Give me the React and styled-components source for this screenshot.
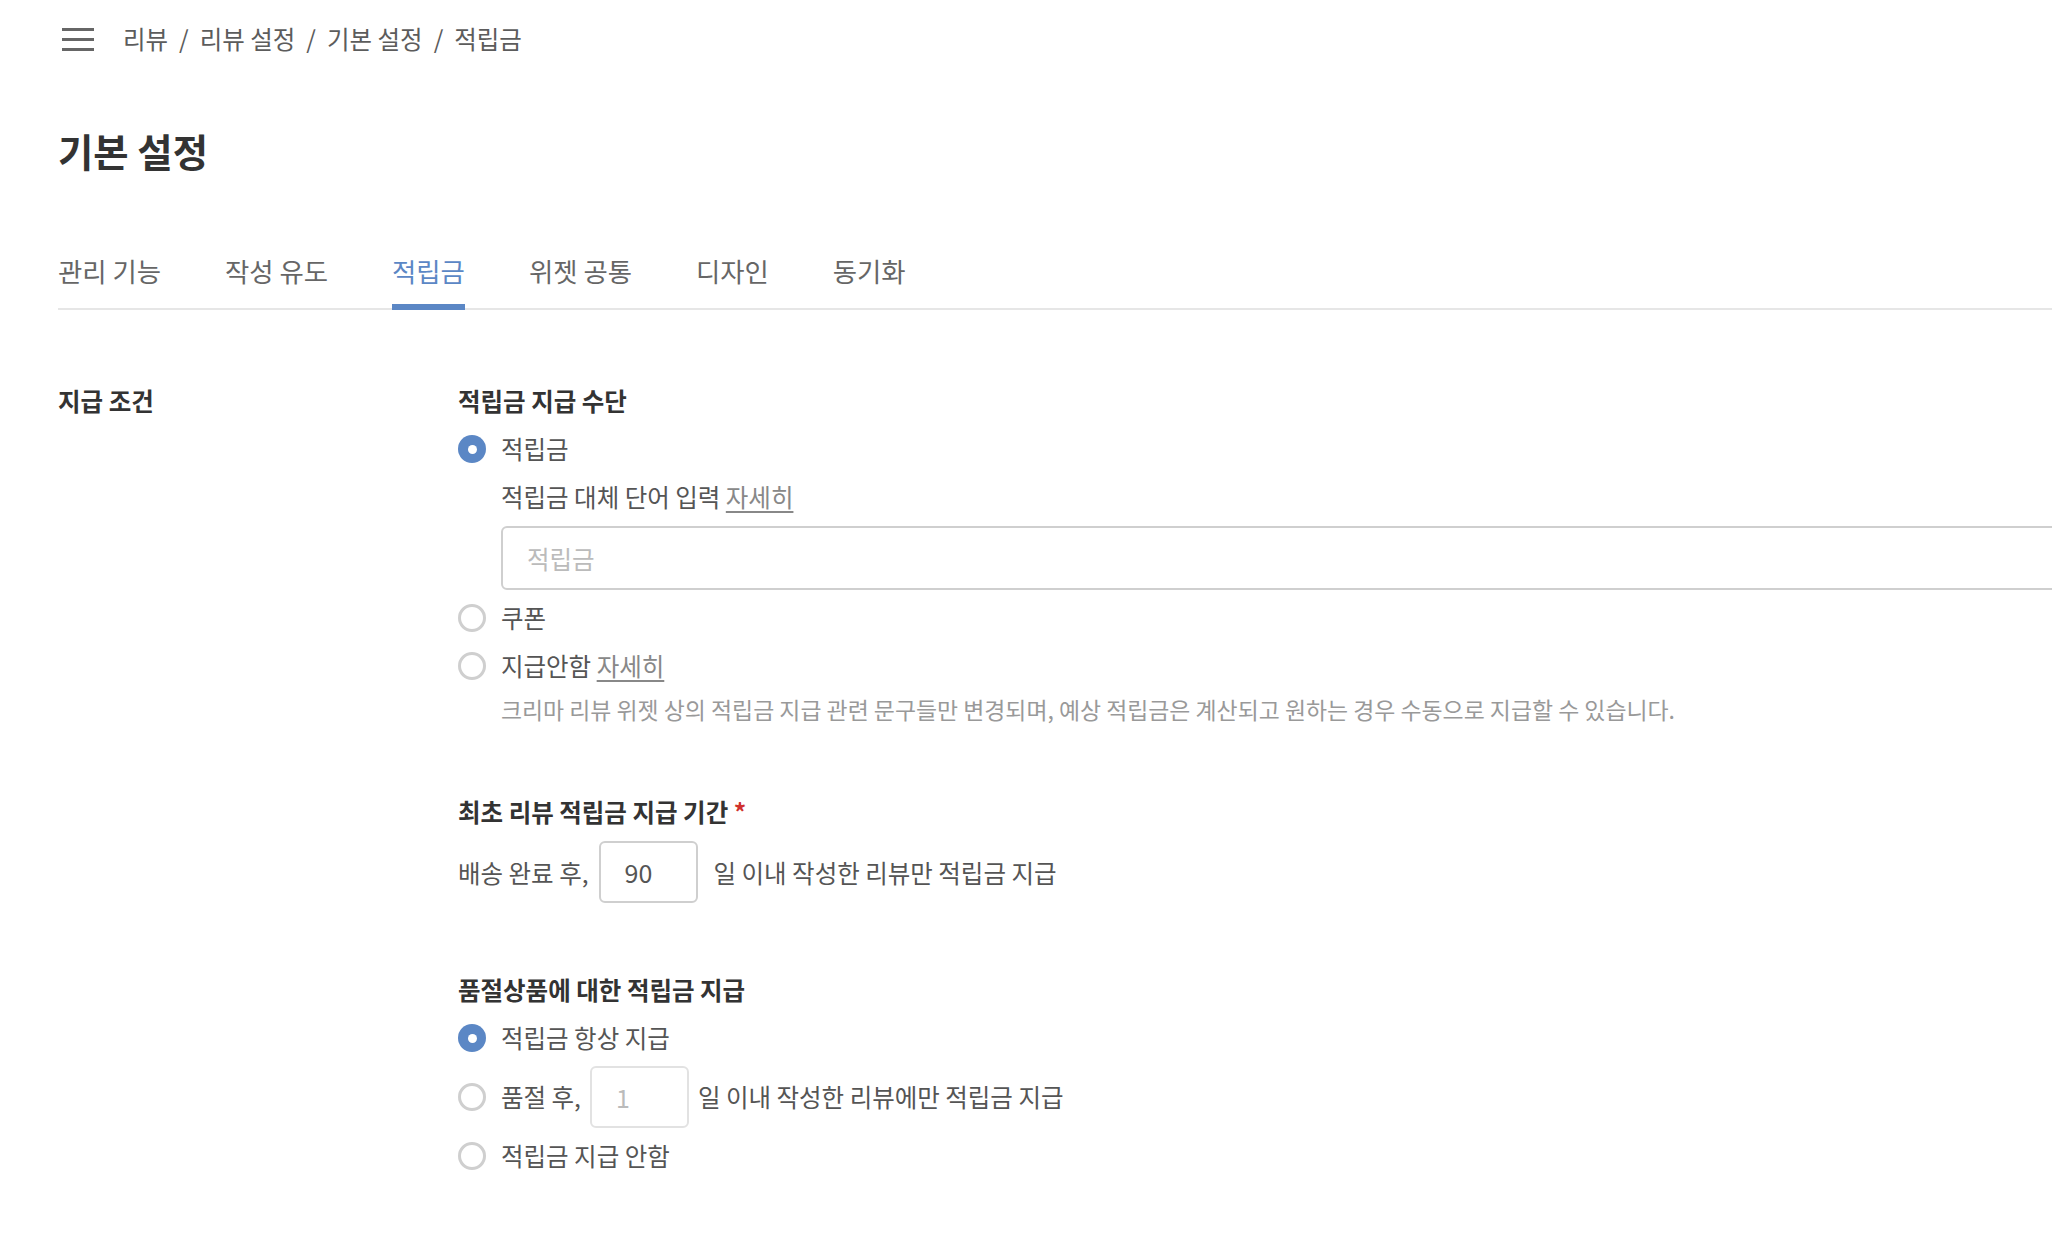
import styled, { createGlobalStyle } from 'styled-components';

const GlobalStyle = createGlobalStyle`
  html, body {
    margin: 0;
    padding: 0;
    background: #fff;
    overflow-x: hidden;
  }
  body {
    font-family: "Noto Sans CJK KR", "Noto Sans", sans-serif;
    color: #555;
  }
`;

const tabs = ['관리 기능', '작성 유도', '적립금', '위젯 공통', '디자인', '동기화'];
const crumbs = ['리뷰', '리뷰 설정', '기본 설정', '적립금'];

function Radio({ checked, label, children }) {
  return (
    <RadioRow>
      <RadioMark checked={checked} />
      {label && <span>{label}</span>}
      {children}
    </RadioRow>
  );
}

export default function App() {
  return (
    <Page>
      <GlobalStyle />
      <TopBar>
        <Hamburger aria-label="menu">
          <span />
          <span />
          <span />
        </Hamburger>
        <Breadcrumb>
          {crumbs.map((c, i) => (
            <li key={c + i}>
              {i > 0 && <Sep>/</Sep>}
              {c}
            </li>
          ))}
        </Breadcrumb>
      </TopBar>

      <Title>기본 설정</Title>

      <Tabs>
        {tabs.map((t) => (
          <Tab key={t} active={t === '적립금'}>{t}</Tab>
        ))}
      </Tabs>

      <Content>
        <SideLabel>지급 조건</SideLabel>
        <Fields>
          <Section>
            <Heading>적립금 지급 수단</Heading>
            <Radio checked label="적립금" />
            <SubLabel>
              적립금 대체 단어 입력 <HelpLink>자세히</HelpLink>
            </SubLabel>
            <WideInput placeholder="적립금" />
            <Radio label="쿠폰" />
            <Radio>
              <span>
                지급안함 <HelpLink>자세히</HelpLink>
              </span>
            </Radio>
            <HelpText>
              크리마 리뷰 위젯 상의 적립금 지급 관련 문구들만 변경되며, 예상 적립금은 계산되고 원하는 경우 수동으로 지급할 수 있습니다.
            </HelpText>
          </Section>

          <Section>
            <Heading>
              최초 리뷰 적립금 지급 기간 <Required>*</Required>
            </Heading>
            <InlineRow>
              <span>배송 완료 후,</span>
              <DayInput defaultValue="90" trail={6} />
              <span>일 이내 작성한 리뷰만 적립금 지급</span>
            </InlineRow>
          </Section>

          <Section>
            <Heading>품절상품에 대한 적립금 지급</Heading>
            <RadioGroup>
              <Radio checked label="적립금 항상 지급" />
              <Radio>
                <InlineGroup>
                  <span>품절 후,</span>
                  <DayInput defaultValue="1" disabled trail={0} />
                  <span>일 이내 작성한 리뷰에만 적립금 지급</span>
                </InlineGroup>
              </Radio>
              <Radio label="적립금 지급 안함" />
            </RadioGroup>
          </Section>
        </Fields>
      </Content>
    </Page>
  );
}

const Page = styled.div`
  padding: 0 0 60px 58px;
  min-height: 1238px;
  box-sizing: border-box;
`;

const TopBar = styled.header`
  height: 78px;
  display: flex;
  align-items: center;
  gap: 29px;
`;

const Hamburger = styled.button`
  border: 0;
  background: none;
  padding: 0;
  margin-left: 4px;
  width: 32px;
  display: flex;
  flex-direction: column;
  gap: 7px;
  cursor: pointer;

  span {
    display: block;
    height: 3px;
    width: 32px;
    background: #666;
  }
`;

const Breadcrumb = styled.ol`
  list-style: none;
  margin: 0;
  padding: 0;
  display: flex;
  font-size: 24.5px;
  line-height: 36px;
  color: #5c5c5c;

  li {
    white-space: pre;
  }
`;

const Sep = styled.span`
  margin: 0 11px;
`;

const Title = styled.h1`
  margin: 47px 0 0;
  font-size: 38.4px;
  line-height: 50px;
  font-weight: 700;
  color: #333;
`;

const Tabs = styled.nav`
  margin-top: 78px;
  display: flex;
  gap: 64px;
  border-bottom: 2px solid #e6e6e6;
`;

const Tab = styled.div`
  font-size: 26.4px;
  line-height: 36px;
  padding-bottom: 15px;
  margin-bottom: -2px;
  color: ${(p) => (p.active ? '#5b87c5' : '#666')};
  border-bottom: 6px solid ${(p) => (p.active ? '#5b87c5' : 'transparent')};
  cursor: pointer;
`;

const Content = styled.main`
  margin-top: 75px;
  display: grid;
  grid-template-columns: 400px 1fr;
`;

const SideLabel = styled.h2`
  margin: 0;
  font-size: 24.5px;
  line-height: 32px;
  font-weight: 700;
  color: #333;
`;

const Fields = styled.div`
  display: flex;
  flex-direction: column;
  gap: 71px;
  min-width: 0;
`;

const Section = styled.section`
  display: flex;
  flex-direction: column;
  font-size: 24.5px;
`;

const Heading = styled.h3`
  margin: 0 0 8px;
  font-size: 24.5px;
  line-height: 32px;
  font-weight: 700;
  color: #333;
`;

const Required = styled.span`
  color: #d0312d;
`;

const RadioGroup = styled.div`
  display: flex;
  flex-direction: column;
  gap: 4px;
`;

const RadioRow = styled.label`
  display: flex;
  align-items: center;
  gap: 15px;
  min-height: 48px;
  line-height: 32px;
  color: #555;
  white-space: nowrap;
`;

const RadioMark = styled.span`
  flex: none;
  width: 28px;
  height: 28px;
  border-radius: 50%;
  box-sizing: border-box;
  display: grid;
  place-items: center;
  background: ${(p) => (p.checked ? '#5b87c5' : '#fff')};
  border: ${(p) => (p.checked ? 'none' : '3px solid #cfcfcf')};

  &::after {
    content: '';
    width: 9px;
    height: 9px;
    border-radius: 50%;
    background: #fff;
    display: ${(p) => (p.checked ? 'block' : 'none')};
  }
`;

const SubLabel = styled.div`
  margin-left: 43px;
  line-height: 48px;
  color: #555;
`;

const HelpLink = styled.a`
  color: #888;
  text-decoration: underline;
  text-underline-offset: 4px;
  cursor: pointer;
`;

const WideInput = styled.input`
  margin: 5px 0 4px 43px;
  width: 1600px;
  height: 64px;
  box-sizing: border-box;
  border: 2px solid #cfcfcf;
  border-radius: 6px;
  padding: 0 24px;
  font: inherit;
  font-size: 24.5px;
  color: #555;
  outline: none;

  &::placeholder {
    color: #bbb;
  }
`;

const HelpText = styled.p`
  margin: 3px 0 0 43px;
  font-size: 22.9px;
  line-height: 32px;
  color: #999;
  white-space: nowrap;
`;

const InlineRow = styled.div`
  margin-top: 5px;
  display: flex;
  align-items: center;
  gap: 10px;
  color: #555;
  white-space: nowrap;
`;

const InlineGroup = styled.span`
  display: flex;
  align-items: center;
  gap: 9px;
`;

const DayInput = styled.input`
  width: 99px;
  height: 62px;
  box-sizing: border-box;
  border: 2px solid ${(p) => (p.disabled ? '#e2e2e2' : '#cfcfcf')};
  border-radius: 6px;
  padding: 0 24px;
  margin-right: ${(p) => p.trail}px;
  font: inherit;
  font-size: 25px;
  color: ${(p) => (p.disabled ? '#bbb' : '#555')};
  background: #fff;
  outline: none;
`;
